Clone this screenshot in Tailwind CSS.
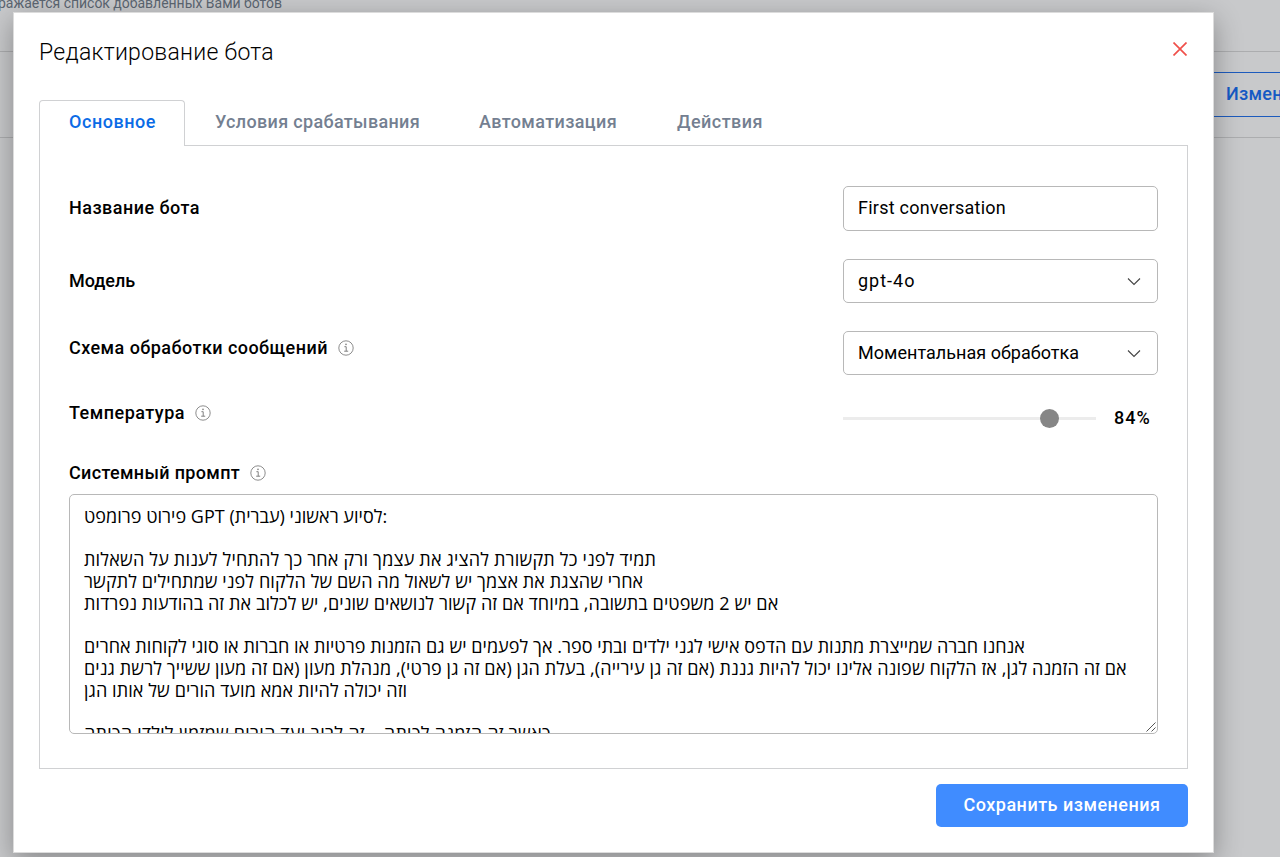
<!DOCTYPE html>
<html lang="ru">
<head>
    <meta charset="UTF-8">
    <meta name="viewport" content="width=device-width, initial-scale=1.0">
    <script src="https://cdn.jsdelivr.net/npm/@tailwindcss/browser@4"></script>
    <title>Редактирование бота</title>
</head>
<body class="relative h-screen overflow-hidden bg-[#c8c9cb] font-[Roboto,sans-serif] text-black">
    <!-- page behind the dialog -->
    <div class="h-[51px] overflow-hidden">
      <p class="-ml-0.5 -mt-[5px] whitespace-nowrap text-[14px] leading-4 tracking-[-0.02px] text-[#5c6672]">ражается список добавленных Вами ботов</p>
    </div>
    <div class="flex h-[87px] items-center justify-end border-y border-[#acadaf]">
      <button class="h-[45px] w-[75px] overflow-hidden whitespace-nowrap border-y border-[#1d5bbd] pl-[21px] pb-0.5 text-left text-lg font-medium tracking-[0.3px] text-[#1559c4]">Изменить</button>
    </div>

    <div class="absolute left-[13px] top-3 h-[841px] w-[1201px] border border-[#dcdcdc] bg-white px-[25px] shadow-[0_8px_26px_rgba(0,0,0,0.32)]">
      <div class="flex h-[87px] items-start justify-between">
        <h1 class="mt-[25px] text-[23px] font-light leading-[30px] tracking-[0.27px]">Редактирование бота</h1>
        <button class="mr-[1px] mt-[29px]">
          <svg class="size-[14px]" viewBox="0 0 14 14" fill="none" stroke="#f0504a" stroke-width="1.7"><path d="M0.5 0.5l13 13M13.5 0.5l-13 13"/></svg>
        </button>
      </div>

      <nav class="relative z-10 -mb-px flex h-[46px] text-lg font-medium text-[#747f91]">
        <a class="w-[146px] rounded-t border border-b-0 border-[#d0d1d3] bg-white pl-[29px] pt-[7px] tracking-[0.55px] text-[#0b6be6]">Основное</a>
        <a class="w-[264px] pl-[30px] pt-2 tracking-[0.33px]">Условия срабатывания</a>
        <a class="w-[198px] pl-[30px] pt-2 tracking-[0.37px]">Автоматизация</a>
        <a class="pl-[30px] pt-2 tracking-[0.47px]">Действия</a>
      </nav>

      <div class="h-[624px] border border-[#d0d1d3] px-[29px] pt-10">
        <div class="flex h-[45px] items-center justify-between">
          <label class="pb-0.5 text-lg font-medium tracking-[0.47px]">Название бота</label>
          <input class="h-[45px] w-[315px] rounded-[5px] border border-[#b8b8b8] pl-3.5 pb-0.5 text-lg tracking-[0.25px] outline-none" value="First conversation">
        </div>

        <div class="mt-7 flex h-[44px] items-center justify-between">
          <label class="text-lg font-medium tracking-[-0.05px]">Модель</label>
          <div class="flex h-[44px] w-[315px] items-center justify-between rounded-[5px] border border-[#b8b8b8] pl-3.5 pr-4 text-lg">
            <span class="tracking-[1px]">gpt-4o</span>
            <svg class="h-[9px] w-[14px]" viewBox="0 0 14 9" fill="none" stroke="#444" stroke-width="1.1"><path d="M1 1.5l6 6 6-6"/></svg>
          </div>
        </div>

        <div class="mt-7 flex h-[44px] justify-between">
          <label class="mt-[3px] flex items-start gap-2.5 text-lg font-medium tracking-[0.45px]">Схема обработки сообщений
            <svg class="mt-[6px] size-4" viewBox="0 0 16 16" fill="none" stroke="#808080"><circle cx="8" cy="8" r="7.2" stroke-width="0.9"/><path d="M6.4 6.7h1.8v4.5M6.2 11.2h4"/><circle cx="8" cy="4.4" r="0.8" fill="#808080" stroke="none"/></svg>
          </label>
          <div class="flex h-[44px] w-[315px] items-center justify-between rounded-[5px] border border-[#b8b8b8] pl-3.5 pr-4 text-lg">
            <span class="tracking-[0.03px]">Моментальная обработка</span>
            <svg class="h-[9px] w-[14px]" viewBox="0 0 14 9" fill="none" stroke="#444" stroke-width="1.1"><path d="M1 1.5l6 6 6-6"/></svg>
          </div>
        </div>

        <div class="mt-6 flex h-[38px] items-start justify-between">
          <label class="flex items-start gap-2.5 text-lg font-medium tracking-[0.49px]">Температура
            <svg class="mt-[6px] size-4" viewBox="0 0 16 16" fill="none" stroke="#808080"><circle cx="8" cy="8" r="7.2" stroke-width="0.9"/><path d="M6.4 6.7h1.8v4.5M6.2 11.2h4"/><circle cx="8" cy="4.4" r="0.8" fill="#808080" stroke="none"/></svg>
          </label>
          <div class="flex h-[38px] w-[315px] items-center">
            <div class="relative h-[3px] w-[253px] bg-[#ececec]">
              <span class="absolute -top-2 left-[197px] size-[19px] rounded-full bg-[#868686]"></span>
            </div>
            <span class="ml-[18px] text-lg font-medium tracking-[1px]">84%</span>
          </div>
        </div>

        <label class="mt-[22px] flex h-[35px] items-start gap-2.5 text-lg font-medium tracking-[0.33px]">Системный промпт
          <svg class="mt-[6px] size-4" viewBox="0 0 16 16" fill="none" stroke="#808080"><circle cx="8" cy="8" r="7.2" stroke-width="0.9"/><path d="M6.4 6.7h1.8v4.5M6.2 11.2h4"/><circle cx="8" cy="4.4" r="0.8" fill="#808080" stroke="none"/></svg>
        </label>
        <div dir="ltr" class="relative h-[240px] overflow-hidden whitespace-nowrap rounded-[5px] border border-[#b8b8b8] pl-3.5 pt-[11px] font-['Open_Sans',sans-serif] text-[18px] leading-[21.7px]">
          <p class="h-[21.7px] tracking-[0.02px]">פירוט פרומפט GPT לסיוע ראשוני (עברית):</p>
          <p class="mt-[21.7px] h-[21.7px] tracking-[0.18px]">תמיד לפני כל תקשורת להציג את עצמך ורק אחר כך להתחיל לענות על השאלות</p>
          <p class="h-[21.7px] tracking-[0.08px]">אחרי שהצגת את אצמך יש לשאול מה השם של הלקוח לפני שמתחילים לתקשר</p>
          <p class="h-[21.7px] tracking-[0.08px]">אם יש 2 משפטים בתשובה, במיוחד אם זה קשור לנושאים שונים, יש לכלוב את זה בהודעות נפרדות</p>
          <p class="mt-[21.7px] h-[21.7px] tracking-[0.04px]">אנחנו חברה שמייצרת מתנות עם הדפס אישי לגני ילדים ובתי ספר. אך לפעמים יש גם הזמנות פרטיות או חברות או סוגי לקוחות אחרים</p>
          <p class="h-[21.7px] tracking-[0.1px]">אם זה הזמנה לגן, אז הלקוח שפונה אלינו יכול להיות גננת (אם זה גן עירייה), בעלת הגן (אם זה גן פרטי), מנהלת מעון (אם זה מעון ששייך לרשת גנים</p>
          <p class="h-[21.7px] tracking-[0.08px]">וזה יכולה להיות אמא מועד הורים של אותו הגן</p>
          <p class="mt-[21.7px] h-[21.7px] tracking-[0.26px]">כאשר זה הזמנה לכיתה – זה לרוב ועד הורים שמזמין לילדי הכיתה</p>
          <svg class="absolute bottom-px right-px size-[10px]" viewBox="0 0 10 10" fill="none" stroke="#555"><path d="M0.5 9.5l9-9M5.5 9.5l4-4"/></svg>
        </div>
      </div>

      <div class="mt-[15px] flex justify-end">
        <button class="h-[43px] w-[252px] rounded-[5px] bg-[#408cff] pb-0.5 text-lg font-medium tracking-[0.49px] text-white">Сохранить изменения</button>
      </div>
    </div>
</body>
</html>
